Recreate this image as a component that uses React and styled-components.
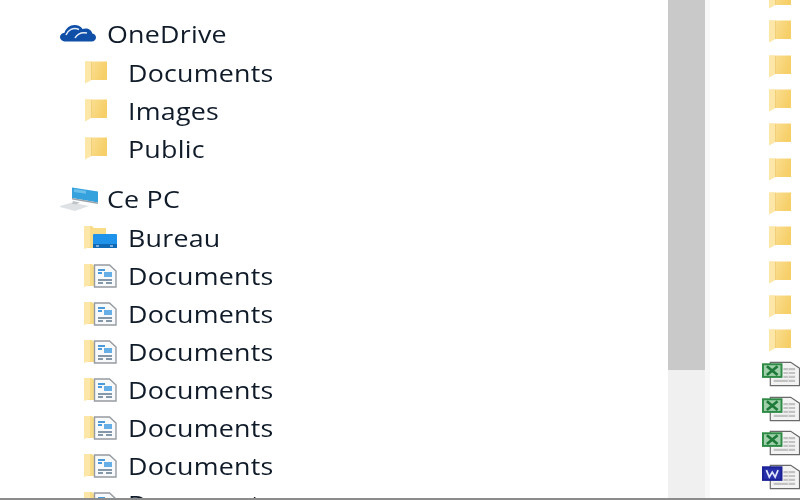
import styled, { createGlobalStyle } from "styled-components";

const GlobalStyle = createGlobalStyle`
  html, body {
    margin: 0;
    background: #fff;
    overflow: hidden;
  }
`;

const Page = styled.div`
  width: 800px;
  height: 500px;
  display: flex;
  flex-direction: column;
  overflow: hidden;
  background: #fff;
  font-family: "Open Sans", "Noto Sans", sans-serif;
`;

const Explorer = styled.div`
  flex: 1;
  min-height: 0;
  display: flex;
  overflow: hidden;
  filter: blur(0.6px);
`;

const BottomLine = styled.div`
  height: 2px;
  background: #8c8c8c;
`;

const Sidebar = styled.nav`
  width: 668px;
  flex: none;
  padding-top: 15px;
  overflow: hidden;
`;

const Group = styled.div`
  margin-bottom: 13px;
`;

const Row = styled.div`
  height: 38px;
  display: flex;
  align-items: center;
  padding-left: ${(p) => (p.$head ? "60px" : "84px")};
  white-space: nowrap;
`;

const IconSlot = styled.div`
  width: ${(p) => (p.$head ? "47px" : "44px")};
  flex: none;
  display: flex;
  align-items: center;
`;

// the screenshot was stretched sideways, so the text is too
const Label = styled.span`
  display: inline-block;
  margin-top: ${(p) => (p.$head ? "0" : "2px")};
  color: #101b29;
  font-size: 23px;
  font-weight: 500;
  letter-spacing: 0.2px;
  transform: scaleX(1.165);
  transform-origin: left center;
`;

const Scrollbar = styled.div`
  width: 37px;
  flex: none;
  background: #f0f0f0;
`;

const Thumb = styled.div`
  height: 370px;
  background: #c9c9c9;
`;

const Gutter = styled.div`
  width: 5px;
  flex: none;
  background: #f8f8f8;
`;

const FileColumn = styled.div`
  flex: 1;
  margin-top: -20px;
  padding-left: 52px;
  overflow: hidden;
`;

const FileRow = styled.div`
  height: 34.3px;
  display: flex;
  align-items: center;
  padding-left: ${(p) => (p.$folder ? "6px" : "0")};
`;

const Folder = () => (
  <svg width="24" height="24" viewBox="0 0 24 24">
    <defs>
      <linearGradient id="folderBody" x1="0" y1="0" x2="1" y2="0.3">
        <stop offset="0" stopColor="#fbe3a0" />
        <stop offset="1" stopColor="#f6cf68" />
      </linearGradient>
    </defs>
    <path d="M1 1.500h22v18.500H1z" fill="url(#folderBody)" />
    <path d="M1 1.500h6.500V20L1 23.500z" fill="#fce6a8" />
    <path d="M7.500 2V20" stroke="#f1cf78" strokeWidth="1" />
  </svg>
);

const BackFolder = ({ children }) => (
  <svg width="33" height="26" viewBox="0 0 33 26">
    <path d="M0 2h8l2 2h12v20H0z" fill="#f9dc88" />
    <path d="M0 2h6v21l-6 2z" fill="#fce6a8" />
    {children}
  </svg>
);

const DesktopFolder = () => (
  <BackFolder>
    <rect x="9" y="10" width="24" height="14" rx="1" fill="#1f92ea" />
    <rect x="9" y="20" width="24" height="4" fill="#0f69b4" />
    <path d="M12 22h3M26 22h3" stroke="#e8f4ff" strokeWidth="1.200" />
  </BackFolder>
);

const DocFolder = () => (
  <BackFolder>
    <path d="M10.500 3h15l6.500 6v16H10.500z" fill="#f7f9fa" stroke="#969ba1" strokeWidth="1.400" />
    <path d="M14 8h7M14 11h4" stroke="#4a9adc" strokeWidth="1.800" />
    <path d="M20 10h8v5h-8z" fill="#66aee6" />
    <path d="M14 18h14M14 21h5M22 21h6" stroke="#5f7890" strokeWidth="1.600" />
  </BackFolder>
);

const CloudIcon = () => (
  <svg width="36" height="20" viewBox="0 0 36 20">
    <path
      d="M6 17.500C2.500 17.500 0 15.500 0 13c0-2.300 1.800-4 4.500-4.300C6 4 10 1 14.500 1c3.500 0 6.500 1.600 8 4 1-.4 2-.6 3-.6 3.500 0 6.200 2 6.800 5 2 .4 3.700 1.900 3.700 4s-1.800 4.100-4.500 4.100z"
      fill="#0f4fa8"
    />
    <path d="M6 11C8 6 13 3 19 5.500" fill="none" stroke="#e4edf8" strokeWidth="1.500" />
    <path d="M15 14c2-3.500 6.500-6 12-5" fill="none" stroke="#e4edf8" strokeWidth="1.500" />
  </svg>
);

const PcIcon = () => (
  <svg width="39" height="24" viewBox="0 0 39 24">
    <path d="M-2 19.500l14-4 17 3.500-14 5z" fill="#dfe2e5" />
    <path d="M13 14l7 1.500-4 2-4-.8z" fill="#bfc4c9" />
    <path d="M12 0.500l26 4v11L12 11z" fill="#35a2de" />
    <path d="M14 2l12 1.800v3L14 5z" fill="#68bfea" />
    <path d="M12 11l26 4.500V17L12 12.500z" fill="#9aa3ab" />
  </svg>
);

const SheetBack = ({ children }) => (
  <svg width="39" height="26" viewBox="0 0 39 26">
    <path d="M8.500 1h21l9 6v18H8.500z" fill="#f3f3f3" stroke="#6a6a6a" strokeWidth="1.200" />
    <path d="M22 8h12M22 12h12M22 16h12M12 20h22" stroke="#c2c2c2" strokeWidth="2.200" />
    <path d="M27 7v15" stroke="#e6e6e6" strokeWidth="1" />
    {children}
  </svg>
);

const ExcelIcon = () => (
  <SheetBack>
    <rect x="1" y="3" width="19" height="13" fill="#9fd0aa" stroke="#2e8b46" strokeWidth="2" />
    <path d="M5 5l11 9M16 5L5 14" stroke="#1f7a3a" strokeWidth="2.800" />
  </SheetBack>
);

const WordIcon = () => (
  <SheetBack>
    <rect x="1" y="3" width="19" height="13" fill="#2730a8" stroke="#1a2296" strokeWidth="2" />
    <path d="M4.500 6l3 7 3-5 3 5 3-7" fill="none" stroke="#dfe4fa" strokeWidth="1.800" />
  </SheetBack>
);

const cloudItems = ["Documents", "Images", "Public"];
const docRows = [1, 2, 3, 4, 5, 6, 7];
const folderRows = Array.from({ length: 11 }, (_, i) => i);
const sheetRows = [1, 2, 3];

export default function App() {
  return (
    <Page>
      <GlobalStyle />
      <Explorer>
        <Sidebar>
          <Group>
            <Row $head>
              <IconSlot $head>
                <CloudIcon />
              </IconSlot>
              <Label $head>OneDrive</Label>
            </Row>
            {cloudItems.map((name) => (
              <Row key={name}>
                <IconSlot>
                  <Folder />
                </IconSlot>
                <Label>{name}</Label>
              </Row>
            ))}
          </Group>
          <Group>
            <Row $head>
              <IconSlot $head>
                <PcIcon />
              </IconSlot>
              <Label $head>Ce PC</Label>
            </Row>
            <Row>
              <IconSlot>
                <DesktopFolder />
              </IconSlot>
              <Label>Bureau</Label>
            </Row>
            {docRows.map((n) => (
              <Row key={n}>
                <IconSlot>
                  <DocFolder />
                </IconSlot>
                <Label>Documents</Label>
              </Row>
            ))}
          </Group>
        </Sidebar>
        <Scrollbar>
          <Thumb />
        </Scrollbar>
        <Gutter />
        <FileColumn>
          {folderRows.map((n) => (
            <FileRow key={n} $folder>
              <Folder />
            </FileRow>
          ))}
          {sheetRows.map((n) => (
            <FileRow key={n}>
              <ExcelIcon />
            </FileRow>
          ))}
          <FileRow>
            <WordIcon />
          </FileRow>
        </FileColumn>
      </Explorer>
      <BottomLine />
    </Page>
  );
}
